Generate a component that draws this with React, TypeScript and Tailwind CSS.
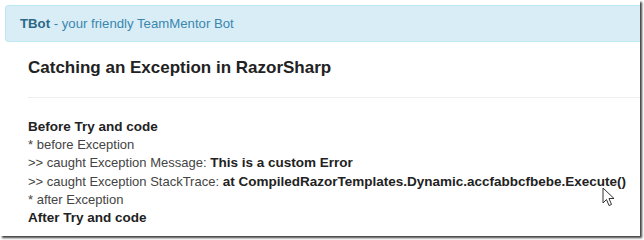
import React from "react";

function Cursor() {
  return (
    <svg
      className="absolute left-[602px] top-[187px]"
      width="14"
      height="21"
      viewBox="0 0 14 21"
    >
      <path
        d="M1 1 L1 16 L4.5 12.5 L7 18.5 L9.5 17.5 L7 11.5 L12 11.5 Z"
        fill="#ffffff"
        stroke="#333"
        strokeWidth="1"
        strokeLinejoin="round"
      />
    </svg>
  );
}

export default function App() {
  return (
    <div
      className="relative w-[644px] h-[240px] bg-white overflow-hidden"
      style={{ fontFamily: '"Liberation Sans", Arial, sans-serif' }}
    >
      <div className="w-[640px] h-[236px] bg-white shadow-[2px_2px_2px_rgba(0,0,0,0.75)]">
        <div className="pt-[5px] pl-[5px]">
          <div className="h-[37px] rounded-l-[4px] border border-r-0 border-[#bce8f1] bg-[#d9edf7] pl-[14px] flex items-center text-[13.2px] text-[#3a87ad]">
            <span className="font-bold text-[#2d6987]">TBot</span>
            <span>&nbsp;- your friendly TeamMentor Bot</span>
          </div>
        </div>
        <div className="pl-[28px]">
          <h1 className="mt-[15px] text-[17px] leading-[22px] font-bold text-[#222]">
            Catching an Exception in RazorSharp
          </h1>
          <div className="mt-[18px] border-t border-[#eeeeee]" />
          <div className="mt-[20px] text-[13px] leading-[18.2px] text-[#444] whitespace-nowrap">
            <div className="font-bold text-[13.5px] text-[#222]">Before Try and code</div>
            <div>* before Exception</div>
            <div>
              &gt;&gt; caught Exception Message:{" "}
              <span className="font-bold text-[13.5px] text-[#222]">This is a custom Error</span>
            </div>
            <div>
              &gt;&gt; caught Exception StackTrace:{" "}
              <span className="font-bold text-[13.5px] text-[#222]">
                at CompiledRazorTemplates.Dynamic.accfabbcfbebe.Execute()
              </span>
            </div>
            <div>* after Exception</div>
            <div className="font-bold text-[13.5px] text-[#222]">After Try and code</div>
          </div>
        </div>
      </div>
      <Cursor />
    </div>
  );
}
